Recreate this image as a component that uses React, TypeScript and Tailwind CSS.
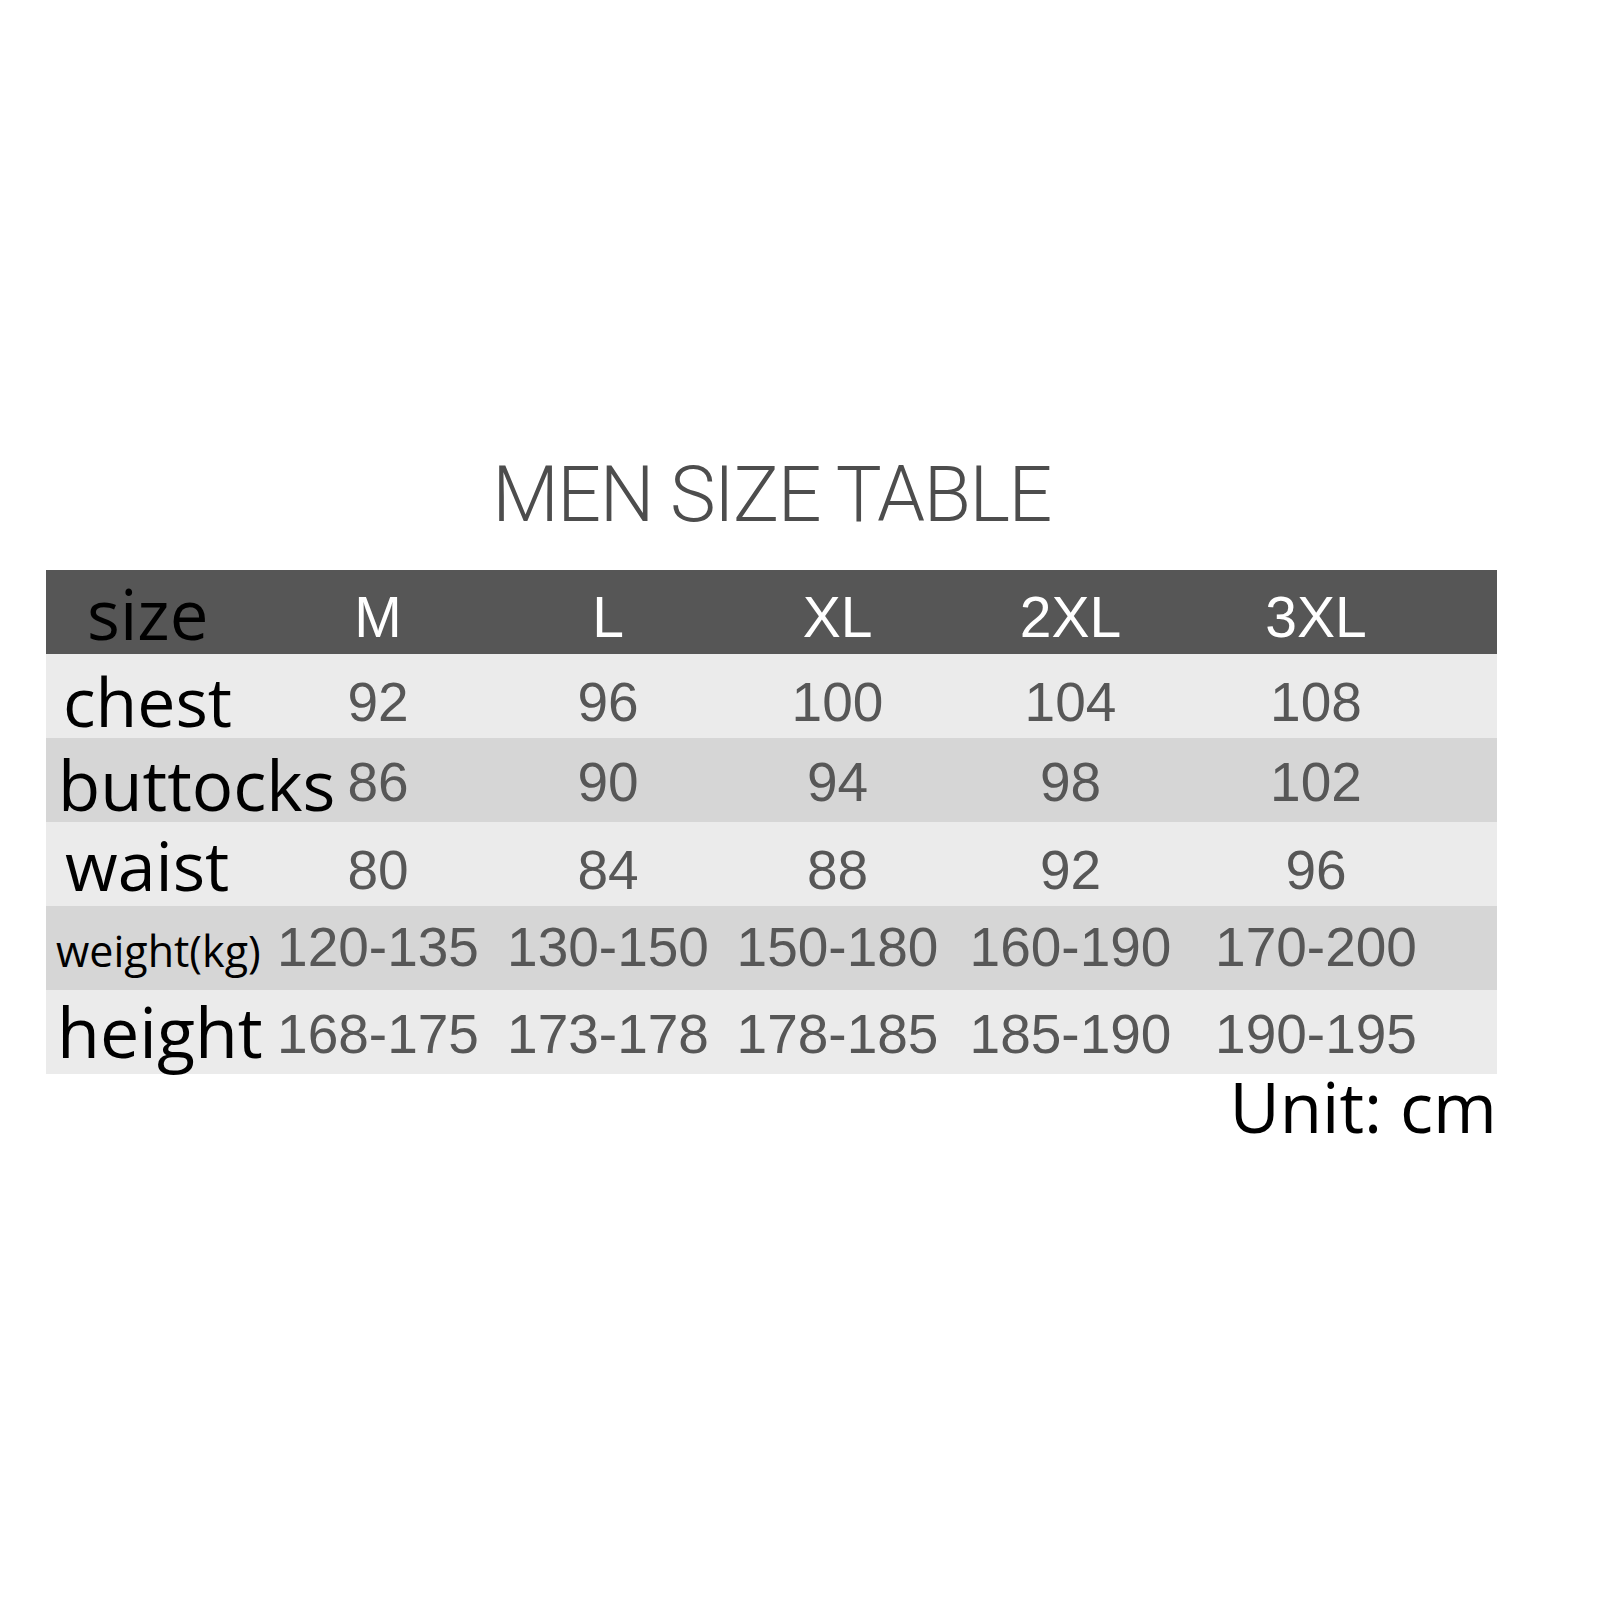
import React from "react";

const sizes = ["M", "L", "XL", "2XL", "3XL"];
const colW = ["w-[230px]", "w-[230px]", "w-[229px]", "w-[237px]", "w-[254px]"];

const rows = [
  { label: "chest", values: ["92", "96", "100", "104", "108"], bg: "bg-[#ebebeb]", lbl: "pl-[17px] pt-[13px] text-[68px]", val: "pt-[21px]" },
  { label: "buttocks", values: ["86", "90", "94", "98", "102"], bg: "bg-[#d6d6d6]", lbl: "pl-[12px] pt-[12px] text-[69px]", val: "pt-[17px]" },
  { label: "waist", values: ["80", "84", "88", "92", "96"], bg: "bg-[#ebebeb]", lbl: "pl-[19px] pt-[9px] text-[68px]", val: "pt-[21px]" },
  { label: "weight(kg)", values: ["120-135", "130-150", "150-180", "160-190", "170-200"], bg: "bg-[#d6d6d6]", lbl: "pl-[10px] pt-[23px] text-[43px]", val: "pt-[14px]" },
  { label: "height", values: ["168-175", "173-178", "178-185", "185-190", "190-195"], bg: "bg-[#ebebeb]", lbl: "pl-[11px] pt-[6px] text-[70px]", val: "pt-[17px]" },
];

const labelFont = "font-['Open_Sans','Noto_Sans',sans-serif]";
const valueFont = "font-['Liberation_Sans','Arial',sans-serif]";

export default function App() {
  return (
    <div className="w-[1600px] h-[1600px] bg-white pt-[457px] pl-[46px]">
      <div className="w-[1451px]">
        {/* Title */}
        <h1 className="text-center text-[77px] leading-none font-light tracking-[-0.02em] text-[#4d4d4d] font-['Roboto','Liberation_Sans',sans-serif] mb-[36px]">
          MEN SIZE TABLE
        </h1>

        {/* Header */}
        <div className="flex items-start h-[84px] bg-[#565656]">
          <div className={`w-[217px] pl-[41px] pt-[9px] text-[69px] leading-none text-black ${labelFont}`}>size</div>
          {sizes.map((s, i) => (
            <div key={s} className={`${colW[i]} pt-[19px] text-center text-[57px] leading-none text-white ${valueFont}`}>
              {s}
            </div>
          ))}
        </div>

        {/* Body */}
        {rows.map((r) => (
          <div key={r.label} className={`flex items-start h-[84px] ${r.bg}`}>
            <div className={`w-[217px] ${r.lbl} leading-none text-black whitespace-nowrap ${labelFont}`}>{r.label}</div>
            {r.values.map((v, i) => (
              <div key={i} className={`${colW[i]} ${r.val} text-center text-[55px] leading-none text-[#575757] whitespace-nowrap ${valueFont}`}>
                {v}
              </div>
            ))}
          </div>
        ))}

        <div className={`text-right text-[69px] leading-none text-black -mt-[2px] ${labelFont}`}>Unit: cm</div>
      </div>
    </div>
  );
}
